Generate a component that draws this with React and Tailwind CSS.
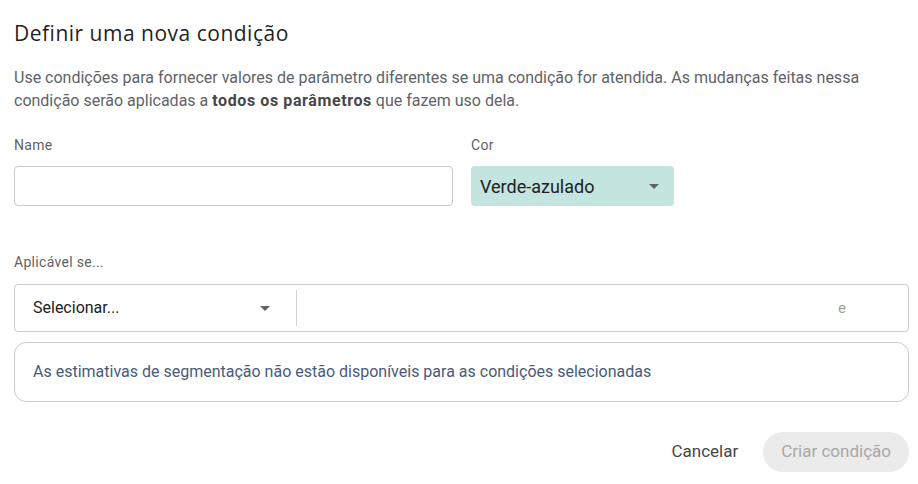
export default function App() {
  const Caret = () => (
    <svg width="10" height="5" viewBox="0 0 10 5" className="shrink-0">
      <path d="M0 0 L10 0 L5 5 Z" fill="#5f6368" />
    </svg>
  );
  return (
    <div className="w-[918px] h-[484px] bg-white px-[14px] pt-[20px] font-['Roboto',sans-serif] text-[#202124]">
      <h1 className="text-[21px] leading-[26px] font-['Open_Sans',sans-serif] text-[#1f1f1f] tracking-[0.5px]">Definir uma nova condição</h1>
      <p className="mt-[20px] text-[16px] leading-[23px] text-[#5f6368] pr-[20px]">
        Use condições para fornecer valores de parâmetro diferentes se uma condição for atendida. As mudanças feitas nessa condição serão aplicadas a <b className="font-bold text-[#474747] tracking-[0.6px]">todos os parâmetros</b> que fazem uso dela.
      </p>
      <div className="mt-[25px] flex gap-[18px]">
        <div className="w-[439px] flex flex-col">
          <label className="text-[14px] leading-[16px] tracking-[0.3px] text-[#5f6368]">Name</label>
          <div className="mt-[13px] h-[40px] border border-[#c7cacf] rounded-[4px]" />
        </div>
        <div className="flex flex-col">
          <label className="text-[14px] leading-[16px] tracking-[0.3px] text-[#5f6368]">Cor</label>
          <div className="mt-[13px] h-[40px] w-[203px] bg-[#c4e4df] rounded-[4px] flex items-center pl-[9px] pr-[15px] justify-between">
            <span className="text-[18px] text-[#202124]">Verde-azulado</span>
            <Caret />
          </div>
        </div>
      </div>
      <div className="mt-[48px] text-[14px] leading-[16px] tracking-[0.3px] text-[#5f6368]">Aplicável se...</div>
      <div className="mt-[14px] h-[48px] w-[895px] border border-[#c7cacf] rounded-[4px] flex items-center">
        <div className="w-[281px] pl-[18px] pr-[26px] flex items-center justify-between">
          <span className="text-[16px] text-[#202124]">Selecionar...</span>
          <Caret />
        </div>
        <div className="w-px h-[36px] bg-[#d0d3d7]" />
        <div className="flex-1 flex justify-end pr-[62px]">
          <span className="text-[15px] text-[#9aa0a6]">e</span>
        </div>
      </div>
      <div className="mt-[10px] h-[60px] w-[895px] border border-[#c7cacf] rounded-[12px] flex items-center pl-[18px]">
        <span className="text-[16px] text-[#4a5a7a]">As estimativas de segmentação não estão disponíveis para as condições selecionadas</span>
      </div>
      <div className="mt-[30px] flex justify-end items-center gap-[25px] w-[895px]">
        <span className="text-[17px] text-[#444746]">Cancelar</span>
        <div className="h-[40px] px-[18px] rounded-full bg-[#ebebeb] flex items-center">
          <span className="text-[17px] text-[#a8a8a8]">Criar condição</span>
        </div>
      </div>
    </div>
  );
}
